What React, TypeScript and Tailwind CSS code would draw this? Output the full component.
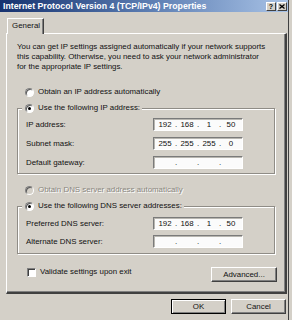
import React from 'react';

const Radio = ({ on, disabled }: { on?: boolean; disabled?: boolean }) => (
  <span
    className={`w-[9px] h-[9px] shrink-0 rounded-full border border-t-[#808080] border-l-[#808080] border-b-white border-r-white shadow-[inset_1px_1px_0_#5a5a5a] flex items-center justify-center ${
      disabled ? 'bg-[#d4d0c8]' : 'bg-white'
    }`}
  >
    {on && <span className="w-[3px] h-[3px] rounded-full bg-black" />}
  </span>
);

const IpBox = ({ parts }: { parts: string[] }) => (
  <div className="w-[90px] h-[13px] bg-[#fbfbfb] border border-t-[#7a7a7a] border-l-[#7a7a7a] border-b-white border-r-white shadow-[inset_1px_1px_0_#b8b6b0] flex items-center pl-[1px] leading-none">
    {parts.map((p, i) => (
      <React.Fragment key={i}>
        {i > 0 && <span className="w-[2px] flex justify-center">.</span>}
        <span className="w-[20px] text-center">{p}</span>
      </React.Fragment>
    ))}
  </div>
);

const Btn = ({ label, isDefault, width }: { label: string; isDefault?: boolean; width: string }) => (
  <div
    className={`${width} h-[15px] flex items-center justify-center border ${
      isDefault
        ? 'border-black shadow-[inset_1px_1px_0_#fff,inset_-1px_-1px_0_#808080]'
        : 'border-t-white border-l-white border-b-[#404040] border-r-[#404040] shadow-[inset_-1px_-1px_0_#808080]'
    }`}
  >
    {label}
  </div>
);

const Field = ({ label, parts }: { label: string; parts: string[] }) => (
  <div className="flex items-center h-[13px]">
    <span className="w-[127px]">{label}</span>
    <IpBox parts={parts} />
  </div>
);

export default function App() {
  return (
    <div className="w-[292px] h-[320px] overflow-hidden bg-[#d4d0c8] text-[#111] text-[7.9px] leading-[10px] flex [font-family:'Liberation_Sans',Arial,sans-serif]">
      <div className="w-[288px] flex flex-col">
        {/* title bar */}
        <div className="h-[12px] shrink-0 flex items-center justify-between pl-[3px] pr-[1px] bg-gradient-to-r from-[#17326f] via-[#5a7bb0] to-[#a9c3e6]">
          <span className="text-white font-bold text-[8.75px] leading-none">
            Internet Protocol Version 4 (TCP/IPv4) Properties
          </span>
          <div className="flex gap-[1px]">
            <div className="w-[10px] h-[9px] bg-[#d4d0c8] border border-t-white border-l-white border-b-[#404040] border-r-[#404040] flex items-center justify-center font-bold text-[7px] leading-none text-black">
              ?
            </div>
            <div className="w-[10px] h-[9px] bg-[#d4d0c8] border border-t-white border-l-white border-b-[#404040] border-r-[#404040] flex items-center justify-center">
              <svg width="6" height="5" viewBox="0 0 6 5">
                <path d="M0.5 0.5 L5.5 4.5 M5.5 0.5 L0.5 4.5" stroke="#000" strokeWidth="1.3" />
              </svg>
            </div>
          </div>
        </div>

        {/* tab strip */}
        <div className="mt-[6px] pl-[7px] h-[15px] shrink-0 flex">
          <div className="w-[37px] h-[16px] border-t border-l border-r border-t-white border-l-white border-r-[#404040] shadow-[inset_-1px_0_0_#808080] bg-[#d4d0c8] pl-[4px] pt-[2px] relative z-10">
            General
          </div>
        </div>

        {/* tab panel */}
        <div className="ml-[6px] w-[281px] h-[261px] shrink-0 flex flex-col border-t border-l border-t-white border-l-white border-r-2 border-b-2 border-r-[#404040] border-b-[#404040] shadow-[inset_-1px_-1px_0_#808080]">
          <p className="mt-[8px] pl-[10px]">
            You can get IP settings assigned automatically if your network supports
            <br />
            this capability. Otherwise, you need to ask your network administrator
            <br />
            for the appropriate IP settings.
          </p>

          <div className="mt-[14px] h-[12px] pl-[18px] flex items-center gap-[4px]">
            <Radio />
            <span>Obtain an IP address automatically</span>
          </div>

          <div className="mt-[10px] mx-[10px] h-[66px] border border-[#8f8c86] shadow-[1px_1px_0_#fff,inset_1px_1px_0_#fff]">
            <div className="-mt-[7px] ml-[4px] w-fit h-[12px] bg-[#d4d0c8] pl-[3px] pr-[2px] flex items-center gap-[4px]">
              <Radio on />
              <span>Use the following IP address:</span>
            </div>
            <div className="mt-[4px] pl-[8px] flex flex-col gap-[6px]">
              <Field label="IP address:" parts={['192', '168', '1', '50']} />
              <Field label="Subnet mask:" parts={['255', '255', '255', '0']} />
              <Field label="Default gateway:" parts={['', '', '', '']} />
            </div>
          </div>

          <div className="mt-[10px] h-[12px] pl-[18px] flex items-center gap-[4px]">
            <Radio disabled />
            <span className="text-[#8a877f] [text-shadow:1px_1px_0_#fff]">Obtain DNS server address automatically</span>
          </div>

          <div className="mt-[10px] mx-[10px] h-[48px] border border-[#8f8c86] shadow-[1px_1px_0_#fff,inset_1px_1px_0_#fff]">
            <div className="-mt-[7px] ml-[4px] w-fit h-[12px] bg-[#d4d0c8] pl-[3px] pr-[2px] flex items-center gap-[4px]">
              <Radio on />
              <span>Use the following DNS server addresses:</span>
            </div>
            <div className="mt-[5px] pl-[8px] flex flex-col gap-[5px]">
              <Field label="Preferred DNS server:" parts={['192', '168', '1', '50']} />
              <Field label="Alternate DNS server:" parts={['', '', '', '']} />
            </div>
          </div>

          <div className="mt-[13px] pl-[20px] pr-[8px] flex items-start justify-between">
            <div className="h-[10px] flex items-center gap-[4px]">
              <span className="w-[9px] h-[9px] bg-white border border-t-[#808080] border-l-[#808080] border-b-white border-r-white shadow-[inset_1px_1px_0_#404040]" />
              <span>Validate settings upon exit</span>
            </div>
            <Btn label="Advanced..." width="w-[66px]" />
          </div>
        </div>

        {/* dialog buttons */}
        <div className="mt-[5px] pr-[2px] flex justify-end gap-[5px]">
          <Btn label="OK" isDefault width="w-[55px]" />
          <Btn label="Cancel" width="w-[55px]" />
        </div>
      </div>
      <div className="w-[4px] border-l border-[#404040]" />
    </div>
  );
}
